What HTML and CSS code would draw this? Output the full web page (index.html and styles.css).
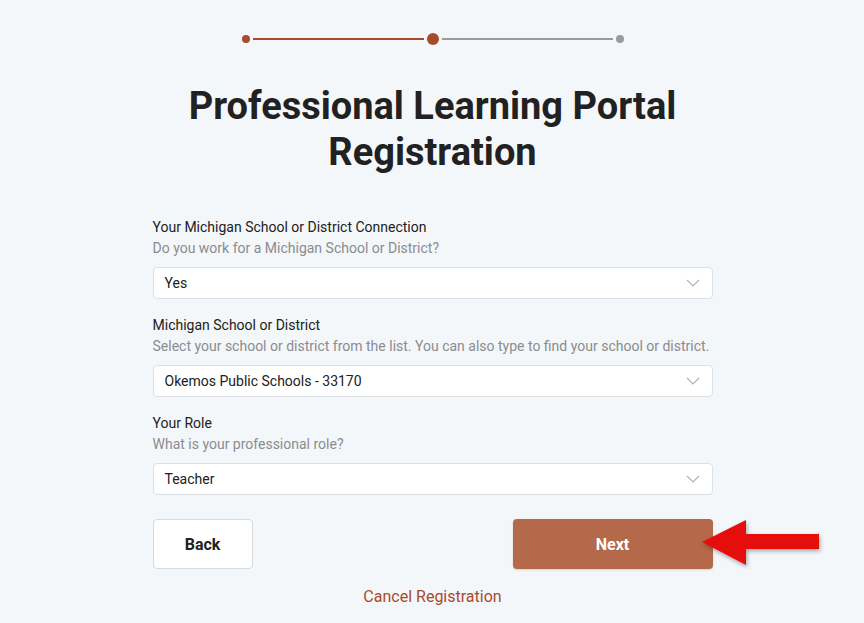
FILE: index.html
```html
<!DOCTYPE html>
<html lang="en">
<head>
    <meta charset="UTF-8">
    <meta name="viewport" content="width=device-width, initial-scale=1.0">
    <title>Professional Learning Portal Registration</title>
    <link rel="stylesheet" href="styles.css">
</head>
<body>
    <div class="page">
        <!-- Progress steps -->
        <div class="steps">
            <span class="dot done"></span>
            <span class="line done"></span>
            <span class="dot current"></span>
            <span class="line"></span>
            <span class="dot"></span>
        </div>

        <h1 class="title">Professional Learning Portal Registration</h1>

        <form class="form">
            <div class="field">
                <div class="label">Your Michigan School or District Connection</div>
                <div class="hint">Do you work for a Michigan School or District?</div>
                <div class="select">
                    <span>Yes</span>
                    <svg class="chevron" width="14" height="8" viewBox="0 0 14 8"><path d="M1 1 L7 7 L13 1" fill="none" stroke="#b0b4b8" stroke-width="1.2"/></svg>
                </div>
            </div>
            <div class="field">
                <div class="label">Michigan School or District</div>
                <div class="hint">Select your school or district from the list. You can also type to find your school or district.</div>
                <div class="select">
                    <span>Okemos Public Schools - 33170</span>
                    <svg class="chevron" width="14" height="8" viewBox="0 0 14 8"><path d="M1 1 L7 7 L13 1" fill="none" stroke="#b0b4b8" stroke-width="1.2"/></svg>
                </div>
            </div>
            <div class="field">
                <div class="label">Your Role</div>
                <div class="hint">What is your professional role?</div>
                <div class="select">
                    <span>Teacher</span>
                    <svg class="chevron" width="14" height="8" viewBox="0 0 14 8"><path d="M1 1 L7 7 L13 1" fill="none" stroke="#b0b4b8" stroke-width="1.2"/></svg>
                </div>
            </div>

            <div class="actions">
                <button type="button" class="btn back">Back</button>
                <div class="next-wrap">
                    <button type="button" class="btn next">Next</button>
                    <!-- annotation arrow -->
                    <svg class="arrow" width="126" height="52" viewBox="0 0 126 52">
                        <defs>
                            <filter id="sh" x="-10%" y="-20%" width="130%" height="150%">
                                <feDropShadow dx="1" dy="2" stdDeviation="2" flood-color="#000" flood-opacity="0.35"/>
                            </filter>
                        </defs>
                        <polygon points="2,25 46,3 46,17 119,17 119,32 46,32 46,48" fill="#e60a0a" filter="url(#sh)"/>
                    </svg>
                </div>
            </div>
        </form>

        <a class="cancel" href="#">Cancel Registration</a>
    </div>
</body>
</html>
```

FILE: styles.css
```css
* {
    box-sizing: border-box;
}
body {
    margin: 0;
    background: #f4f7fa;
    font-family: Roboto, "Liberation Sans", sans-serif;
    color: #212121;
}
.page {
    display: flex;
    flex-direction: column;
    align-items: center;
    padding-top: 33px;
    padding-left: 1px;
}
.steps {
    display: flex;
    align-items: center;
    height: 12px;
    width: 382px;
}
.dot {
    width: 8px;
    height: 8px;
    border-radius: 50%;
    background: #9a9a9e;
    flex: none;
}
.dot.done {
    background: #a94b2b;
}
.dot.current {
    width: 12px;
    height: 12px;
    background: #a94b2b;
}
.line {
    flex: 1;
    height: 2px;
    margin: 0 3px;
    background: #9a9a9e;
}
.line.done {
    background: #a94b2b;
}
.title {
    width: 540px;
    margin: 38px 0 0;
    font-size: 38px;
    line-height: 46px;
    font-weight: 700;
    text-align: center;
    color: #212121;
}
.form {
    width: 560px;
    margin-top: 42px;
    display: flex;
    flex-direction: column;
    gap: 16px;
}
.field {
    display: flex;
    flex-direction: column;
}
.label {
    font-size: 14px;
    line-height: 21px;
    color: #212121;
}
.hint {
    font-size: 14px;
    line-height: 21px;
    color: #8a8c8f;
}
.select {
    margin-top: 8px;
    height: 32px;
    background: #fff;
    border: 1px solid #dcdfe3;
    border-radius: 4px;
    display: flex;
    align-items: center;
    justify-content: space-between;
    padding: 0 12px 0 11px;
    font-size: 14px;
    color: #212121;
}
.actions {
    margin-top: 8px;
    display: flex;
    justify-content: space-between;
    align-items: center;
}
.btn {
    height: 50px;
    border-radius: 4px;
    font-family: Roboto, "Liberation Sans", sans-serif;
    font-size: 16px;
    font-weight: 700;
    cursor: pointer;
}
.back {
    width: 100px;
    background: #fff;
    border: 1px solid #d6d9dd;
    color: #212121;
}
.next-wrap {
    position: relative;
}
.next {
    width: 200px;
    background: #b46a4a;
    border: none;
    color: #fff;
    box-shadow: 0 1px 2px rgba(0, 0, 0, 0.15);
}
.arrow {
    position: absolute;
    left: 187px;
    top: -2px;
}
.cancel {
    margin-top: 18px;
    font-size: 16px;
    line-height: 20px;
    color: #a94b2b;
    text-decoration: none;
}
```
